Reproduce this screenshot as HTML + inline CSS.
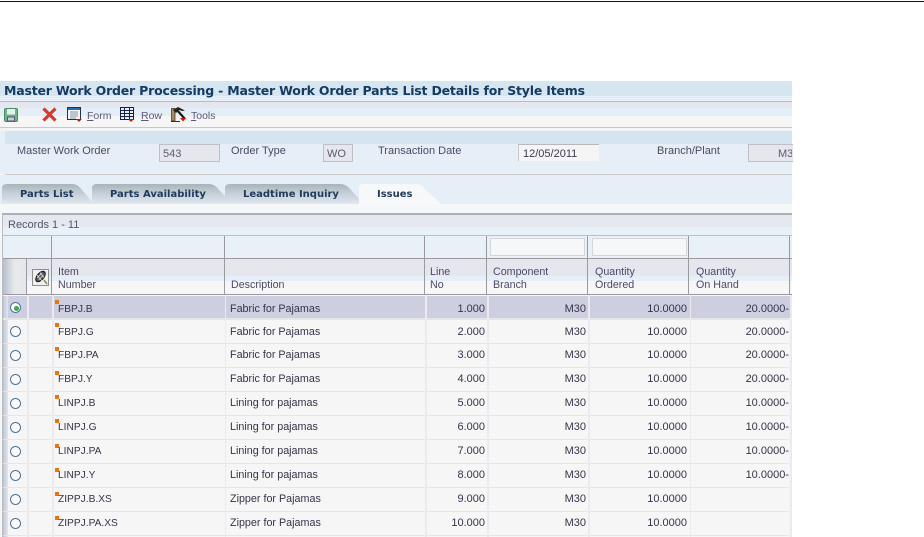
<!DOCTYPE html>
<html><head><meta charset="utf-8">
<style>
html,body{margin:0;padding:0;background:#fff}
body{width:924px;height:537px;overflow:hidden;position:relative;font-family:"Liberation Sans",sans-serif;font-size:11px;color:#34344a}
div,svg{position:absolute}
.t{white-space:nowrap;line-height:12px}
.r{text-align:right}
.i{font-size:10.2px;margin-top:1px}
.d{font-size:10.75px}
.lb{color:#4a4a62;font-size:11px}
.h{color:#4a4a6a;font-size:10.7px;margin-top:1px}
.tab{font-family:"DejaVu Sans",sans-serif;font-weight:bold;font-size:10px;color:#1f3a5c;white-space:nowrap;line-height:12px}
.hl{background:#9a9a9e;height:1px}
.vl{background:#9a9a9e;width:1px}
.rl{position:absolute;left:3px;width:786px;height:1px;background:#e6e6e6}
.radio{width:9px;height:9px;border:1.5px solid #4a7496;border-radius:50%;left:10px;background:#fafafa}
.m{width:4px;height:4px;background:#e8760a;left:55px}
</style></head><body>
<div style="left:0;top:1px;width:924px;height:1px;background:#111"></div>

<!-- main panel -->
<div style="left:0;top:81px;width:792px;height:456px;background:#f6f6f6"></div>
<div style="left:0;top:81px;width:792px;height:15px;background:#d6e6f0"></div>
<div style="left:0;top:96px;width:792px;height:5px;background:#e4eff7"></div>
<div style="left:0;top:101px;width:792px;height:1px;background:#b4bcc8"></div>
<div style="left:0;top:102px;width:792px;height:6px;background:#e6e6ef"></div>
<div style="left:0;top:108px;width:792px;height:8px;background:#e4eef6"></div>
<div style="left:0;top:116px;width:792px;height:11px;background:#f6f6f6"></div>
<div style="left:0;top:127px;width:792px;height:1px;background:#c4c8d0"></div>
<div style="left:0;top:128px;width:792px;height:3px;background:#f2f4f8"></div>
<div style="left:5px;top:131px;width:787px;height:13px;background:#d6e4f0"></div>
<div style="left:0;top:144px;width:792px;height:30px;background:#e6eff7"></div>
<div style="left:0;top:131px;width:5px;height:13px;background:#e6eff7"></div>
<div style="left:5px;top:174px;width:787px;height:1px;background:#cccccc"></div>
<div style="left:0;top:175px;width:792px;height:29px;background:#e6eff7"></div>
<div style="left:0;top:204px;width:792px;height:9px;background:#f6f7f9"></div>

<div class="t" style="left:4px;top:83px;font-family:'DejaVu Sans',sans-serif;font-weight:bold;font-size:12.5px;line-height:15px;color:#163a62;letter-spacing:-.2px">Master Work Order Processing - Master Work Order Parts List Details for Style Items</div>

<!-- toolbar icons -->
<svg style="left:4px;top:108px" width="15" height="14" viewBox="0 0 15 14"><rect x=".5" y=".5" width="13" height="13" rx="1.5" fill="#6fb58a" stroke="#4a8a68"/><rect x="3" y="1" width="8" height="5.5" fill="#e6f2ee"/><rect x="3.5" y="9" width="7" height="4" fill="#c8d0d0" stroke="#557"/></svg>
<svg style="left:42px;top:107px" width="15" height="15" viewBox="0 0 15 15"><path d="M1.5 1.5L13.5 13.5M13.5 1.5L1.5 13.5" stroke="#d8392c" stroke-width="3.2"/></svg>
<svg style="left:67px;top:107px" width="16" height="16" viewBox="0 0 16 16"><rect x=".5" y=".5" width="13" height="12" fill="#f4f6f8" stroke="#22324a"/><rect x="1" y="1" width="12" height="2" fill="#2b6cb0"/><path d="M3 5h8M3 7h8M3 9h8M3 11h6" stroke="#8a94a4"/><path d="M9 12h6l-3 3z" fill="#e01010"/></svg>
<div class="t" style="left:87px;top:110px;color:#5a5a78;font-size:10.5px"><u>F</u>orm</div>
<svg style="left:120px;top:107px" width="16" height="16" viewBox="0 0 16 16"><rect x=".5" y=".5" width="13" height="12" fill="#e8f0f8" stroke="#14224a"/><path d="M.5 3.5h13M.5 6.5h13M.5 9.5h13M4.5 .5v12M9.5 .5v12" stroke="#14224a"/><path d="M8 12h6l-3 3z" fill="#e01010"/></svg>
<div class="t" style="left:141px;top:110px;color:#5a5a78;font-size:10.5px"><u>R</u>ow</div>
<svg style="left:170px;top:106px" width="18" height="17" viewBox="0 0 18 17"><path d="M1.5 15V2.5h3.5V15z" fill="#a88a5c" stroke="#3a2a1a" stroke-width=".7"/><path d="M6 3L15 13" stroke="#1a1a1a" stroke-width="2.2"/><path d="M3 4l5-3 7 3.5-3 .5-3-1-3 3z" fill="#222"/><path d="M10 12h6l-3 3.5z" fill="#e01010"/><path d="M1 15.5h9" stroke="#333"/></svg>
<div class="t" style="left:191px;top:110px;color:#5a5a78;font-size:10.5px"><u>T</u>ools</div>

<!-- form fields -->
<div class="t lb" style="left:17px;top:145px">Master Work Order</div>
<div style="left:159px;top:144px;width:59px;height:16px;background:#e6e6ee;border:1px solid #c0c0c4"></div>
<div class="t" style="left:163px;top:148px;color:#5c5c6c">543</div>
<div class="t lb" style="left:231px;top:145px">Order Type</div>
<div style="left:323px;top:144px;width:28px;height:16px;background:#e6e6ee;border:1px solid #c0c0c4"></div>
<div class="t" style="left:327px;top:148px;color:#5c5c6c">WO</div>
<div class="t lb" style="left:378px;top:145px">Transaction Date</div>
<div style="left:518px;top:144px;width:80px;height:16px;background:#f5f5f5;border-top:1px solid #b8b8bc;border-left:1px solid #c8c8cc"></div>
<div class="t" style="left:523px;top:148px;color:#3a3a4e">12/05/2011</div>
<div class="t lb" style="left:657px;top:145px">Branch/Plant</div>
<div style="left:748px;top:144px;width:44px;height:16px;background:#e6e6ee;border:1px solid #c0c0c4;border-right:0"></div>
<div class="t" style="left:778px;top:148px;color:#5c5c6c;width:14px;overflow:hidden">M30</div>

<!-- tabs -->
<svg style="left:0;top:182px" width="450" height="24" viewBox="0 0 450 24">
<defs><linearGradient id="g" x1="0" y1="0" x2="0" y2="1"><stop offset="0" stop-color="#a9b4ba"/><stop offset=".45" stop-color="#c4ced6"/><stop offset="1" stop-color="#e0e8f0"/></linearGradient></defs>
<path d="M2 22V6q0-4 5-4h65q6 0 10 6l12 14z" fill="url(#g)"/>
<path d="M92 22V6q0-4 5-4h112q6 0 10 6l14 14z" fill="url(#g)"/>
<path d="M225 22V6q0-4 5-4h110q6 0 10 5l14 15z" fill="url(#g)"/>
<path d="M359 22V6q0-4 5-4h52q6 0 9 5l16 15z" fill="#f7f8fa"/>
</svg>
<div class="tab" style="left:20px;top:189px">Parts List</div>
<div class="tab" style="left:110px;top:189px">Parts Availability</div>
<div class="tab" style="left:243px;top:189px">Leadtime Inquiry</div>
<div class="tab" style="left:377px;top:189px">Issues</div>

<!-- grid -->
<div style="left:2px;top:213px;width:790px;height:2px;background:#a8b0b8"></div>
<div style="left:2px;top:215px;width:790px;height:12px;background:#e6e8f0"></div>
<div style="left:2px;top:227px;width:790px;height:8px;background:#e8f0f8"></div>
<div class="t" style="left:8px;top:219px;color:#55556c;font-size:11px">Records 1 - 11</div>
<div style="left:2px;top:235px;width:790px;height:1px;background:#bcc0c6"></div>
<div style="left:2px;top:236px;width:790px;height:22px;background:#e8f1f8"></div>
<div class="hl" style="left:2px;top:258px;width:790px"></div>
<div style="left:2px;top:259px;width:790px;height:17px;background:#e6e6ef"></div>
<div style="left:2px;top:276px;width:790px;height:5px;background:#e6eef7"></div>
<div style="left:2px;top:281px;width:790px;height:13px;background:#f6f6f6"></div>
<div class="hl" style="left:2px;top:294px;width:790px"></div>
<div style="left:3px;top:259px;width:23px;height:35px;background:linear-gradient(90deg,#b4bccc 0,#cfd4de 25%,#e6ebe8 50%,#e6e6ef 100%)"></div>
<div style="left:2px;top:213px;width:1px;height:324px;background:#b8bcc4"></div>

<div class="vl" style="left:51px;top:236px;height:58px"></div>
<div class="vl" style="left:26px;top:259px;height:35px"></div>
<div class="vl" style="left:224px;top:236px;height:58px"></div>
<div class="vl" style="left:424px;top:236px;height:58px"></div>
<div class="vl" style="left:486px;top:236px;height:58px"></div>
<div class="vl" style="left:587px;top:236px;height:58px"></div>
<div class="vl" style="left:688px;top:236px;height:58px"></div>
<div class="vl" style="left:789px;top:236px;height:58px"></div>

<div style="left:490px;top:238px;width:93px;height:16px;background:#f6f7f8;border:1px solid #d4d6d8"></div>
<div style="left:592px;top:238px;width:93px;height:16px;background:#f6f7f8;border:1px solid #d4d6d8"></div>

<svg style="left:32px;top:269px" width="18" height="18" viewBox="0 0 18 18"><rect x=".5" y=".5" width="16" height="16" fill="#f0f0f0" stroke="#8f8f8f"/><ellipse cx="8.5" cy="7.5" rx="6.2" ry="3.4" transform="rotate(-50 8.5 7.5)" fill="#555" stroke="#1a1a1a"/><path d="M5 9l5-5M6.5 11l5-5M5 6l5 6M8 3.5l4 5" stroke="#e8e8e8" stroke-width=".7"/><path d="M12 11l3 4" stroke="#8a8a50" stroke-width="1.5"/></svg>

<div class="t h" style="left:58px;top:265px">Item</div>
<div class="t h" style="left:58px;top:278px">Number</div>
<div class="t h" style="left:231px;top:278px">Description</div>
<div class="t h" style="left:430px;top:265px">Line</div>
<div class="t h" style="left:430px;top:278px">No</div>
<div class="t h" style="left:493px;top:265px">Component</div>
<div class="t h" style="left:493px;top:278px">Branch</div>
<div class="t h" style="left:595px;top:265px">Quantity</div>
<div class="t h" style="left:595px;top:278px">Ordered</div>
<div class="t h" style="left:696px;top:265px">Quantity</div>
<div class="t h" style="left:696px;top:278px">On Hand</div>

<!-- row selection -->
<div style="left:3px;top:296px;width:787px;height:22px;background:#cdcfe0"></div>
<div style="left:3px;top:296px;width:5px;height:241px;background:linear-gradient(90deg,#bcc4d2,#e4e6ec)"></div>

<div class="rl" style="top:318px;height:2px"></div>
<div class="rl" style="top:343px"></div>
<div class="rl" style="top:367px"></div>
<div class="rl" style="top:391px"></div>
<div class="rl" style="top:415px"></div>
<div class="rl" style="top:439px"></div>
<div class="rl" style="top:463px"></div>
<div class="rl" style="top:487px"></div>
<div class="rl" style="top:511px"></div>
<div class="rl" style="top:535px"></div>

<div style="left:27px;top:295px;width:2px;height:242px;background:#eaeaf0"></div>
<div style="left:52px;top:295px;width:2px;height:242px;background:#eaeaf0"></div>
<div style="left:225px;top:295px;width:1px;height:242px;background:#eaeaf0"></div>
<div style="left:425px;top:295px;width:2px;height:242px;background:#eaeaf0"></div>
<div style="left:487px;top:295px;width:2px;height:242px;background:#eaeaf0"></div>
<div style="left:588px;top:295px;width:2px;height:242px;background:#eaeaf0"></div>
<div style="left:690px;top:295px;width:1px;height:242px;background:#eaeaf0"></div>
<div style="left:790px;top:295px;width:2px;height:242px;background:#eaeaf0"></div>

<!-- radios -->
<div class="radio" style="top:302px"></div><div style="left:13.5px;top:305.5px;width:5px;height:5px;border-radius:50%;background:#3aa84a"></div>
<div class="radio" style="top:326px"></div>
<div class="radio" style="top:350px"></div>
<div class="radio" style="top:374px"></div>
<div class="radio" style="top:398px"></div>
<div class="radio" style="top:422px"></div>
<div class="radio" style="top:446px"></div>
<div class="radio" style="top:470px"></div>
<div class="radio" style="top:494px"></div>
<div class="radio" style="top:518px"></div>

<!-- markers -->
<div class="m" style="top:300px"></div>
<div class="m" style="top:323px"></div>
<div class="m" style="top:347px"></div>
<div class="m" style="top:371px"></div>
<div class="m" style="top:395px"></div>
<div class="m" style="top:419px"></div>
<div class="m" style="top:444px"></div>
<div class="m" style="top:468px"></div>
<div class="m" style="top:492px"></div>
<div class="m" style="top:516px"></div>

<!-- rows -->
<div class="t i" style="left:58px;top:303px">FBPJ.B</div><div class="t d" style="left:230px;top:303px">Fabric for Pajamas</div><div class="t r" style="left:425px;width:60px;top:303px">1.000</div><div class="t r" style="left:487px;width:99px;top:303px">M30</div><div class="t r" style="left:588px;width:99px;top:303px">10.0000</div><div class="t r" style="left:690px;width:99px;top:303px">20.0000-</div>
<div class="t i" style="left:58px;top:326px">FBPJ.G</div><div class="t d" style="left:230px;top:326px">Fabric for Pajamas</div><div class="t r" style="left:425px;width:60px;top:326px">2.000</div><div class="t r" style="left:487px;width:99px;top:326px">M30</div><div class="t r" style="left:588px;width:99px;top:326px">10.0000</div><div class="t r" style="left:690px;width:99px;top:326px">20.0000-</div>
<div class="t i" style="left:58px;top:349px">FBPJ.PA</div><div class="t d" style="left:230px;top:349px">Fabric for Pajamas</div><div class="t r" style="left:425px;width:60px;top:349px">3.000</div><div class="t r" style="left:487px;width:99px;top:349px">M30</div><div class="t r" style="left:588px;width:99px;top:349px">10.0000</div><div class="t r" style="left:690px;width:99px;top:349px">20.0000-</div>
<div class="t i" style="left:58px;top:373px">FBPJ.Y</div><div class="t d" style="left:230px;top:373px">Fabric for Pajamas</div><div class="t r" style="left:425px;width:60px;top:373px">4.000</div><div class="t r" style="left:487px;width:99px;top:373px">M30</div><div class="t r" style="left:588px;width:99px;top:373px">10.0000</div><div class="t r" style="left:690px;width:99px;top:373px">20.0000-</div>
<div class="t i" style="left:58px;top:397px">LINPJ.B</div><div class="t d" style="left:230px;top:397px">Lining for pajamas</div><div class="t r" style="left:425px;width:60px;top:397px">5.000</div><div class="t r" style="left:487px;width:99px;top:397px">M30</div><div class="t r" style="left:588px;width:99px;top:397px">10.0000</div><div class="t r" style="left:690px;width:99px;top:397px">10.0000-</div>
<div class="t i" style="left:58px;top:421px">LINPJ.G</div><div class="t d" style="left:230px;top:421px">Lining for pajamas</div><div class="t r" style="left:425px;width:60px;top:421px">6.000</div><div class="t r" style="left:487px;width:99px;top:421px">M30</div><div class="t r" style="left:588px;width:99px;top:421px">10.0000</div><div class="t r" style="left:690px;width:99px;top:421px">10.0000-</div>
<div class="t i" style="left:58px;top:445px">LINPJ.PA</div><div class="t d" style="left:230px;top:445px">Lining for pajamas</div><div class="t r" style="left:425px;width:60px;top:445px">7.000</div><div class="t r" style="left:487px;width:99px;top:445px">M30</div><div class="t r" style="left:588px;width:99px;top:445px">10.0000</div><div class="t r" style="left:690px;width:99px;top:445px">10.0000-</div>
<div class="t i" style="left:58px;top:469px">LINPJ.Y</div><div class="t d" style="left:230px;top:469px">Lining for pajamas</div><div class="t r" style="left:425px;width:60px;top:469px">8.000</div><div class="t r" style="left:487px;width:99px;top:469px">M30</div><div class="t r" style="left:588px;width:99px;top:469px">10.0000</div><div class="t r" style="left:690px;width:99px;top:469px">10.0000-</div>
<div class="t i" style="left:58px;top:493px">ZIPPJ.B.XS</div><div class="t d" style="left:230px;top:493px">Zipper for Pajamas</div><div class="t r" style="left:425px;width:60px;top:493px">9.000</div><div class="t r" style="left:487px;width:99px;top:493px">M30</div><div class="t r" style="left:588px;width:99px;top:493px">10.0000</div>
<div class="t i" style="left:58px;top:517px">ZIPPJ.PA.XS</div><div class="t d" style="left:230px;top:517px">Zipper for Pajamas</div><div class="t r" style="left:425px;width:60px;top:517px">10.000</div><div class="t r" style="left:487px;width:99px;top:517px">M30</div><div class="t r" style="left:588px;width:99px;top:517px">10.0000</div>
</body></html>
